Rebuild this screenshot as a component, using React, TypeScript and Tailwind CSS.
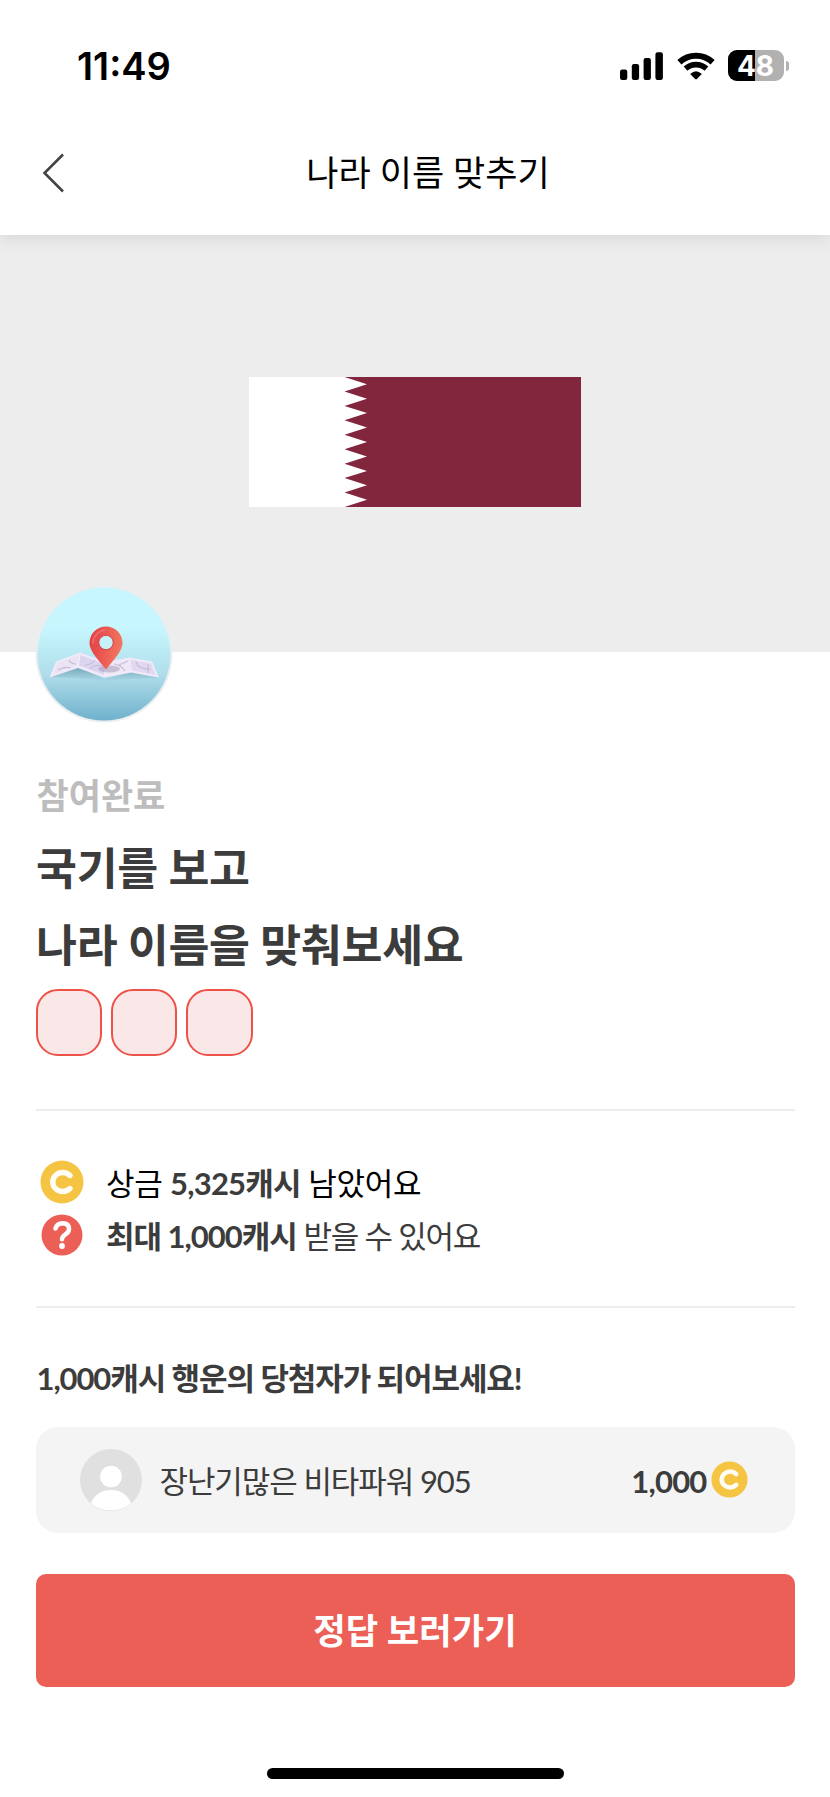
import { clsx } from 'clsx';

const KOREAN = "font-['Lato','Noto_Sans_CJK_KR',sans-serif]";

function SignalIcon() {
  return (
    <svg width="44" height="28" viewBox="0 0 44 28" fill="black">
      <rect x="0" y="17.5" width="7.3" height="10.5" rx="2.2" />
      <rect x="11.8" y="12" width="7.3" height="16" rx="2.2" />
      <rect x="23.6" y="6" width="7.3" height="22" rx="2.2" />
      <rect x="35.4" y="0.3" width="7.5" height="27.7" rx="2.2" />
    </svg>
  );
}

function WifiIcon() {
  return (
    <svg width="38" height="28" viewBox="0 0 38 28" fill="none" stroke="black">
      <path d="M2.4 10.3 A24.5 24.5 0 0 1 35.6 10.3" strokeWidth="6" />
      <path d="M8.6 16.6 A15.6 15.6 0 0 1 29.4 16.600" strokeWidth="5.6" />
      <path d="M13.2 22 Q19 16.6 24.8 22 L19.9 27 Q19 27.8 18.1 27 Z" fill="black" stroke="none" />
    </svg>
  );
}

function Battery() {
  return (
    <div className="flex items-center gap-[2px]">
      <div className="relative flex h-[31px] w-[56px] items-center justify-center overflow-hidden rounded-[9px] bg-[#b1b1b1]">
        <div className="absolute inset-y-0 left-0 w-[27px] bg-black" />
        <span className="relative pr-[1px] font-['Inter',sans-serif] text-[28px] leading-none font-bold text-white">48</span>
      </div>
      <div className="h-[10px] w-[3px] rounded-r-full bg-[#b1b1b1]" />
    </div>
  );
}

function QatarFlag() {
  return (
    <svg width="332" height="130" viewBox="0 0 332 130">
      <rect width="332" height="130" fill="#fff" />
      <path
        fill="#82263d"
        d="M332 0H95.5L118 7.2 95.5 14.4 118 21.7 95.5 28.9 118 36.1 95.5 43.3 118 50.6 95.5 57.8 118 65 95.5 72.2 118 79.4 95.5 86.7 118 93.9 95.5 101.1 118 108.3 95.5 115.6 118 122.8 95.5 130H332Z"
      />
    </svg>
  );
}

function MapBadge() {
  return (
    <svg width="138" height="138" viewBox="0 0 138 138">
      <defs>
        <linearGradient id="sky" x1="0" y1="0" x2="0" y2="1">
          <stop offset="0.3" stopColor="#c8f6fe" />
          <stop offset="0.65" stopColor="#b0deea" />
          <stop offset="1" stopColor="#70b1cd" />
        </linearGradient>
        <linearGradient id="pin" x1="0" y1="0" x2="1" y2="0.2">
          <stop offset="0" stopColor="#e23c42" />
          <stop offset="1" stopColor="#f27560" />
        </linearGradient>
        <linearGradient id="shade" x1="0" y1="0" x2="0" y2="1">
          <stop offset="0" stopColor="#5f8ea5" stopOpacity="0.8" />
          <stop offset="1" stopColor="#5f8ea5" stopOpacity="0" />
        </linearGradient>
      </defs>
      <circle cx="69" cy="69" r="68.5" fill="#ebeef0" />
      <circle cx="69" cy="69" r="66.5" fill="url(#sky)" />
      <path d="M14 92 L42 81 L69 94 L96 87 L125 93 L96 94 L70 96 L42 93Z" fill="url(#shade)" />
      <path d="M21 76.5 L45 67.5 L70 77 L95 72.500 L117 76.500 L124 92.500 L96 87.500 L69.500 92.500 L43 83 L14.500 92.500Z" fill="#f1eafa" />
      <path d="M22.5 78 L44 70 L42 80.5 L18 89.500Z" fill="#e9e3f4" />
      <path d="M45.5 70 L69.500 79 L69 90 L44 80.500Z" fill="#dcd5f0" />
      <path d="M71 79 L94 74.500 L95.500 85.500 L70.500 90Z" fill="#efe7f5" />
      <path d="M95.500 74.500 L116 78.500 L121 90 L97 85.500Z" fill="#e0d9f1" />
      <g fill="none" stroke="#c6bed9" strokeWidth="1.200">
        <path d="M23 85 Q29 81 36 83 M34 75 Q36 79 41 79" />
        <path d="M50 80 Q56 80 60 75 M55 84 Q59 79 67 81" />
        <path d="M79 79 Q86 80 90 86 M84 80 L93 76" />
        <path d="M101 77 Q103 84 116 84.500 M113 79 V88" />
      </g>
      <ellipse cx="74" cy="84" rx="11" ry="3.500" fill="#8f819f" opacity="0.4" />
      <path d="M71 84.500 C67 79 54.500 67 54.500 58 A16.500 16.500 0 0 1 87.500 58 C87.500 67 75 79 71 84.500Z" fill="url(#pin)" />
      <path d="M58 58 A13.500 13.500 0 0 1 70 45" fill="none" stroke="#f0797b" strokeWidth="2" strokeLinecap="round" opacity="0.6" />
      <circle cx="71" cy="57.500" r="7.200" fill="#c8f1f8" stroke="#cc3038" strokeWidth="0.800" />
    </svg>
  );
}

function CoinIcon({ size }: { size: number }) {
  return (
    <svg width={size} height={size} viewBox="0 0 44 44">
      <circle cx="22" cy="22" r="21.500" fill="#f6c443" />
      <path d="M30 15.500 A10 9.500 0 1 0 30 28.500" fill="none" stroke="#fffdf4" strokeWidth="5.400" strokeLinecap="round" />
    </svg>
  );
}

function QuestionIcon() {
  return (
    <svg width="44" height="42" viewBox="0 0 44 42">
      <circle cx="22" cy="21" r="20.500" fill="#ec5f56" />
      <path d="M15.500 14.500 Q17 9.300 22.500 9.300 Q29 9.500 29 15 Q29 18.300 25.500 20.300 Q22 22.500 22 25.300" fill="none" stroke="white" strokeWidth="4.500" strokeLinecap="round" />
      <circle cx="22" cy="32" r="2.900" fill="white" />
    </svg>
  );
}

function UserIcon() {
  return (
    <svg width="62" height="62" viewBox="0 0 62 62">
      <circle cx="31" cy="31" r="31" fill="#e0e0e0" />
      <circle cx="31" cy="27.500" r="10.800" fill="white" />
      <path d="M11 54 C15 45 22 41 31 41 S47 45 51 54 C46 59 39 61.300 31 61.300 S16 59 11 54Z" fill="white" />
    </svg>
  );
}

export default function App() {
  return (
    <div className={clsx('flex h-[1797px] w-full flex-col overflow-hidden bg-white text-[#3c3c3c]', KOREAN)}>
      <header className="relative z-10 h-[235px] shrink-0 bg-white shadow-[0_4px_16px_rgba(0,0,0,0.09)]">
        {/* Status bar */}
        <div className="flex h-[112px] items-center justify-between pt-[19px] pr-[41px] pl-[77px]">
          <span className="font-['Inter',sans-serif] text-[38px] leading-none font-semibold text-black">11:49</span>
          <div className="flex items-center">
            <SignalIcon />
            <div className="ml-[13px]">
              <WifiIcon />
            </div>
            <div className="ml-[13px]">
              <Battery />
            </div>
          </div>
        </div>

        {/* Title bar */}
        <div className="grid h-[122px] grid-cols-[100px_1fr_74px] items-center">
          <button className="pl-[42px]">
            <svg width="23" height="40" viewBox="0 0 23 40" fill="none" stroke="#444" strokeWidth="2.600">
              <path d="M21 1.500 L2.500 20 L21 38.500" />
            </svg>
          </button>
          <h1 className="pb-[2px] text-center text-[35px] leading-none font-normal text-black">나라 이름 맞추기</h1>
        </div>
      </header>

      <section className="flex h-[417px] shrink-0 items-start justify-center bg-[#ededed] pt-[142px]">
        <QatarFlag />
      </section>

      <main className="flex flex-col px-[35.500px]">
        <div className="z-10 -mt-[67px] -ml-[0.500px] h-[138px]">
          <MapBadge />
        </div>

        <p className="mt-[47px] ml-[1px] text-[35px] leading-[50px] font-bold text-[#bdbdbd]">참여완료</p>
        <h2 className="mt-[9px] ml-[0.500px] text-[44.500px] leading-[77px] font-bold tracking-[-0.300px]">
          국기를 보고
          <br />
          나라 이름을 맞춰보세요
        </h2>

        <div className="mt-[6px] flex gap-[8.700px]">
          {[0, 1, 2].map((i) => (
            <div key={i} className="size-[66.600px] rounded-[22px] border-2 border-[#ee5147] bg-[#fae8e8]" />
          ))}
        </div>

        <div className="mt-[53px] flex h-[199px] flex-col justify-center border-y-2 border-[#ededed] text-[31px] leading-[53px]">
          <div className="flex h-[53px] items-center pl-[4.500px]">
            <CoinIcon size={44} />
            <p className="mt-[3px] ml-[22px] tracking-[-0.300px] whitespace-nowrap text-black">
              상금 <b className="tracking-[-0.800px] text-[#3c3c3c]">5,325캐시</b> 남았어요
            </p>
          </div>
          <div className="flex h-[53px] items-center pl-[4.500px]">
            <QuestionIcon />
            <p className="mt-[3px] ml-[22px] tracking-[-1.300px] whitespace-nowrap">
              <b className="tracking-[-1px]">최대 1,000캐시</b> 받을 수 있어요
            </p>
          </div>
        </div>

        <h3 className="mt-[47px] ml-[1px] text-[31px] leading-[46px] font-bold tracking-[-1.080px]">
          1,000캐시 행운의 당첨자가 되어보세요!
        </h3>
        <div className="mt-[26px] flex h-[106px] items-center rounded-[22px] bg-[#f4f4f4] pr-[47px] pl-[44px] text-[31px]">
          <UserIcon />
          <span className="mt-[4px] ml-[18px] flex-1 tracking-[-1.100px]">장난기많은 비타파워 905</span>
          <b className="mt-[4px] mr-[4px] tracking-[-0.800px]">1,000</b>
          <CoinIcon size={37} />
        </div>

        <button className="mt-[41px] h-[113px] rounded-[10px] bg-[#ec5f56] pt-[3px] text-[35.300px] font-bold text-white">
          정답 보러가기
        </button>
      </main>

      <div className="mx-auto mt-[81px] h-[11px] w-[297px] shrink-0 rounded-full bg-black" />
    </div>
  );
}
